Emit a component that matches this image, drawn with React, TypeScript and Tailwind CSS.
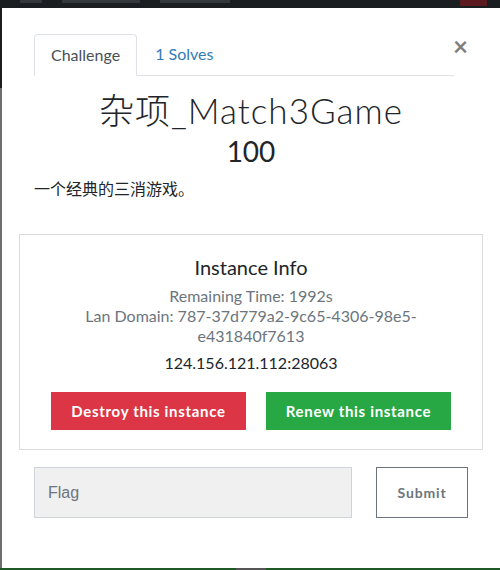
import React from 'react';

const lato = { fontFamily: 'Lato, "Noto Sans CJK SC", sans-serif' };

function InstanceInfo() {
  return (
    <div className="mx-[17px] mt-[33px] border border-[#dcdcdc] px-[30px] pt-[20px] pb-[19px] text-center">
      <h4 className="text-[20px] leading-[24px] text-[#212529]">Instance Info</h4>
      <div className="mt-[7px] text-[16px] leading-[20px] text-[#6c757d]">
        <p>Remaining Time: 1992s</p>
        <p>Lan Domain: 787-37d779a2-9c65-4306-98e5-e431840f7613</p>
      </div>
      <p className="mt-[7px] text-[16px] leading-[20px] text-[#212529]">124.156.121.112:28063</p>
      <div className="mt-[19px] flex justify-center gap-[20px]">
        <button className="h-[38px] w-[195px] bg-[#dc3545] text-[15px] font-bold tracking-[0.045em] text-white">
          Destroy this instance
        </button>
        <button className="h-[38px] w-[185px] bg-[#28a745] text-[15px] font-bold tracking-[0.045em] text-white">
          Renew this instance
        </button>
      </div>
    </div>
  );
}

export default function App() {
  return (
    <div className="flex h-[570px] w-[500px] flex-col overflow-hidden bg-[#1b1e21]" style={lato}>
      {/* dimmed navbar behind the modal */}
      <div className="flex h-[8px] shrink-0 items-start gap-[20px] pl-[20px]">
        <span className="h-[3px] w-[22px] bg-[#33383d]"></span>
        <span className="h-[3px] w-[78px] bg-[#33383d]"></span>
        <span className="h-[3px] w-[70px] bg-[#33383d]"></span>
        <span className="ml-auto mr-[13px] h-[6px] w-[27px] bg-[#5a1a20]"></span>
      </div>

      <div className="flex flex-1">
        <div className="flex w-[2px] shrink-0 flex-col">
          <div className="h-[80px] bg-[#1b1e21]"></div>
          <div className="flex-1 bg-[#6e6e6e]"></div>
        </div>

        {/* modal */}
        <div className="relative flex-1 bg-white pt-[26px]">
          <button className="absolute right-[32px] top-[25px] text-[26px] font-bold leading-[26px] text-black opacity-50">
            ×
          </button>

          <ul className="ml-[32px] flex w-[420px] border-b border-[#dee2e6] text-[16px]">
            <li className="-mb-px rounded-t-[4px] border border-[#dee2e6] border-b-white bg-white px-[16px] py-[8px] leading-[24px] text-[#495057]">
              Challenge
            </li>
            <li className="ml-[2px] px-[16px] py-[8px] leading-[24px] text-[#337ab7]">1 Solves</li>
          </ul>

          <h2 className="mt-[12px] text-center text-[35px] font-light leading-[44px] tracking-[0.03em] text-[#212529]">
            杂项_Match3Game
          </h2>
          <h3 className="mt-[2px] text-center text-[28px] leading-[34px] text-[#212529]">100</h3>

          <p className="ml-[32px] mt-[9px] text-[16px] leading-[24px] text-[#212529]">一个经典的三消游戏。</p>

          <InstanceInfo />

          <div className="ml-[32px] mt-[17px] flex gap-[24px]">
            <input
              placeholder="Flag"
              className="h-[51px] w-[318px] border border-[#ced4da] bg-[#f0f0f0] px-[13px] text-[16px] text-[#495057] placeholder:text-[#6c757d]"
              style={{ fontFamily: '"Liberation Sans", Arial, sans-serif' }}
            />
            <button className="h-[51px] w-[92px] border border-[#6c757d] text-[14px] font-bold tracking-[0.06em] text-[#6c757d]">
              Submit
            </button>
          </div>
        </div>
      </div>

      <div className="flex h-[2px] shrink-0 bg-[#1f5a26]">
        <div className="ml-[236px] w-[30px] bg-[#555]"></div>
      </div>
    </div>
  );
}
